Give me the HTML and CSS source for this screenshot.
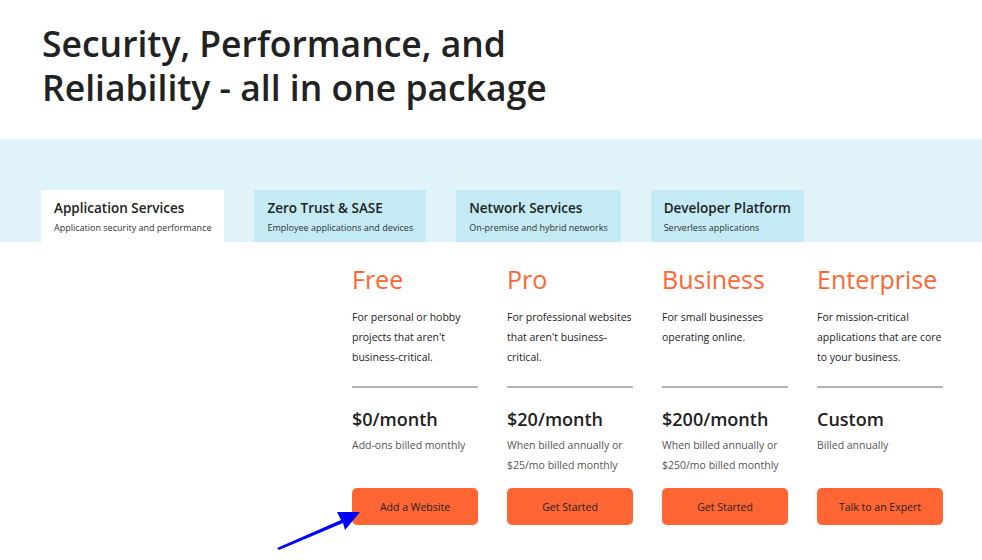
FILE: index.html
```html
<!DOCTYPE html>
<html lang="en">
<head>
  <meta charset="UTF-8">
  <meta name="viewport" content="width=device-width, initial-scale=1.0">
  <link rel="stylesheet" href="styles.css">
  <title>Plans</title>
</head>
<body>
  <header class="hero">
    <h1>Security, Performance, and<br>Reliability - all in one package</h1>
  </header>
  <div class="band">
    <nav class="tabs">
      <div class="tab active">
        <div class="tab-title">Application Services</div>
        <div class="tab-sub">Application security and performance</div>
      </div>
      <div class="tab">
        <div class="tab-title">Zero Trust &amp; SASE</div>
        <div class="tab-sub">Employee applications and devices</div>
      </div>
      <div class="tab">
        <div class="tab-title">Network Services</div>
        <div class="tab-sub">On-premise and hybrid networks</div>
      </div>
      <div class="tab">
        <div class="tab-title">Developer Platform</div>
        <div class="tab-sub">Serverless applications</div>
      </div>
    </nav>
  </div>
  <section class="plans">
    <div class="plan">
      <h2>Free</h2>
      <p class="desc">For personal or hobby projects that aren't business-critical.</p>
      <div class="price">$0/month</div>
      <p class="note">Add-ons billed monthly</p>
      <button class="cta">Add a Website</button>
    </div>
    <div class="plan">
      <h2>Pro</h2>
      <p class="desc">For professional websites that aren't business-critical.</p>
      <div class="price">$20/month</div>
      <p class="note">When billed annually or $25/mo billed monthly</p>
      <button class="cta">Get Started</button>
    </div>
    <div class="plan">
      <h2>Business</h2>
      <p class="desc">For small businesses operating online.</p>
      <div class="price">$200/month</div>
      <p class="note">When billed annually or $250/mo billed monthly</p>
      <button class="cta">Get Started</button>
    </div>
    <div class="plan">
      <h2>Enterprise</h2>
      <p class="desc">For mission-critical applications that are core to your business.</p>
      <div class="price">Custom</div>
      <p class="note">Billed annually</p>
      <button class="cta">Talk to an Expert</button>
    </div>
  </section>
  <svg class="pointer" width="100" height="50" viewBox="0 0 100 50">
    <path d="M0 48 L64 20 L60 12 L83 12 L68 30 L66 23 L2 50 Z" fill="#0000ff"/>
  </svg>
</body>
</html>
```

FILE: styles.css
```css
body {
  font-family: 'Open Sans', 'Noto Sans', sans-serif;
  margin: 0;
  padding: 0;
  color: #222;
  background: #fff;
  position: relative;
  height: 560px;
  overflow: hidden;
}
.hero {
  height: 139px;
  padding: 21px 0 0 42px;
  box-sizing: border-box;
}
.hero h1 {
  margin: 0;
  font-size: 35.5px;
  line-height: 44px;
  font-weight: 600;
  color: #222;
}
.band {
  background-color: #dff3f9;
  padding: 51px 0 0 41px;
}
.tabs {
  display: flex;
  gap: 30px;
}
.tab {
  background-color: #c4eaf4;
  padding: 9px 13px 6px;
  height: 52px;
  box-sizing: border-box;
}
.tab.active {
  background-color: #fff;
}
.tab-title {
  font-size: 13.5px;
  font-weight: 600;
  line-height: 18px;
  color: #222;
}
.tab-sub {
  font-size: 9px;
  line-height: 14px;
  margin-top: 4px;
  color: #333;
}
.plans {
  display: grid;
  grid-template-columns: repeat(4, 126px);
  column-gap: 29px;
  margin-left: 352px;
  padding-top: 20px;
}
.plan {
  display: flex;
  flex-direction: column;
}
.plan h2 {
  margin: 0;
  font-size: 25px;
  line-height: 34px;
  font-weight: 500;
  color: #ff6633;
}
.desc {
  margin: 11px -4px 0 0;
  font-size: 10.5px;
  line-height: 20px;
  height: 60px;
  padding-bottom: 19px;
  color: #222;
}
.price {
  border-top: 2px solid #b3b3b3;
  padding-top: 18px;
  font-size: 18px;
  line-height: 26px;
  font-weight: 600;
  color: #222;
}
.note {
  margin: 3px 0 0;
  font-size: 10.5px;
  line-height: 20px;
  height: 40px;
  color: #555;
}
.cta {
  margin-top: 13px;
  width: 100%;
  height: 37px;
  border: none;
  border-radius: 5px;
  background-color: #ff6633;
  color: #222;
  font-family: inherit;
  font-size: 10.5px;
  cursor: pointer;
}
.pointer {
  position: absolute;
  left: 277px;
  top: 500px;
}
```
